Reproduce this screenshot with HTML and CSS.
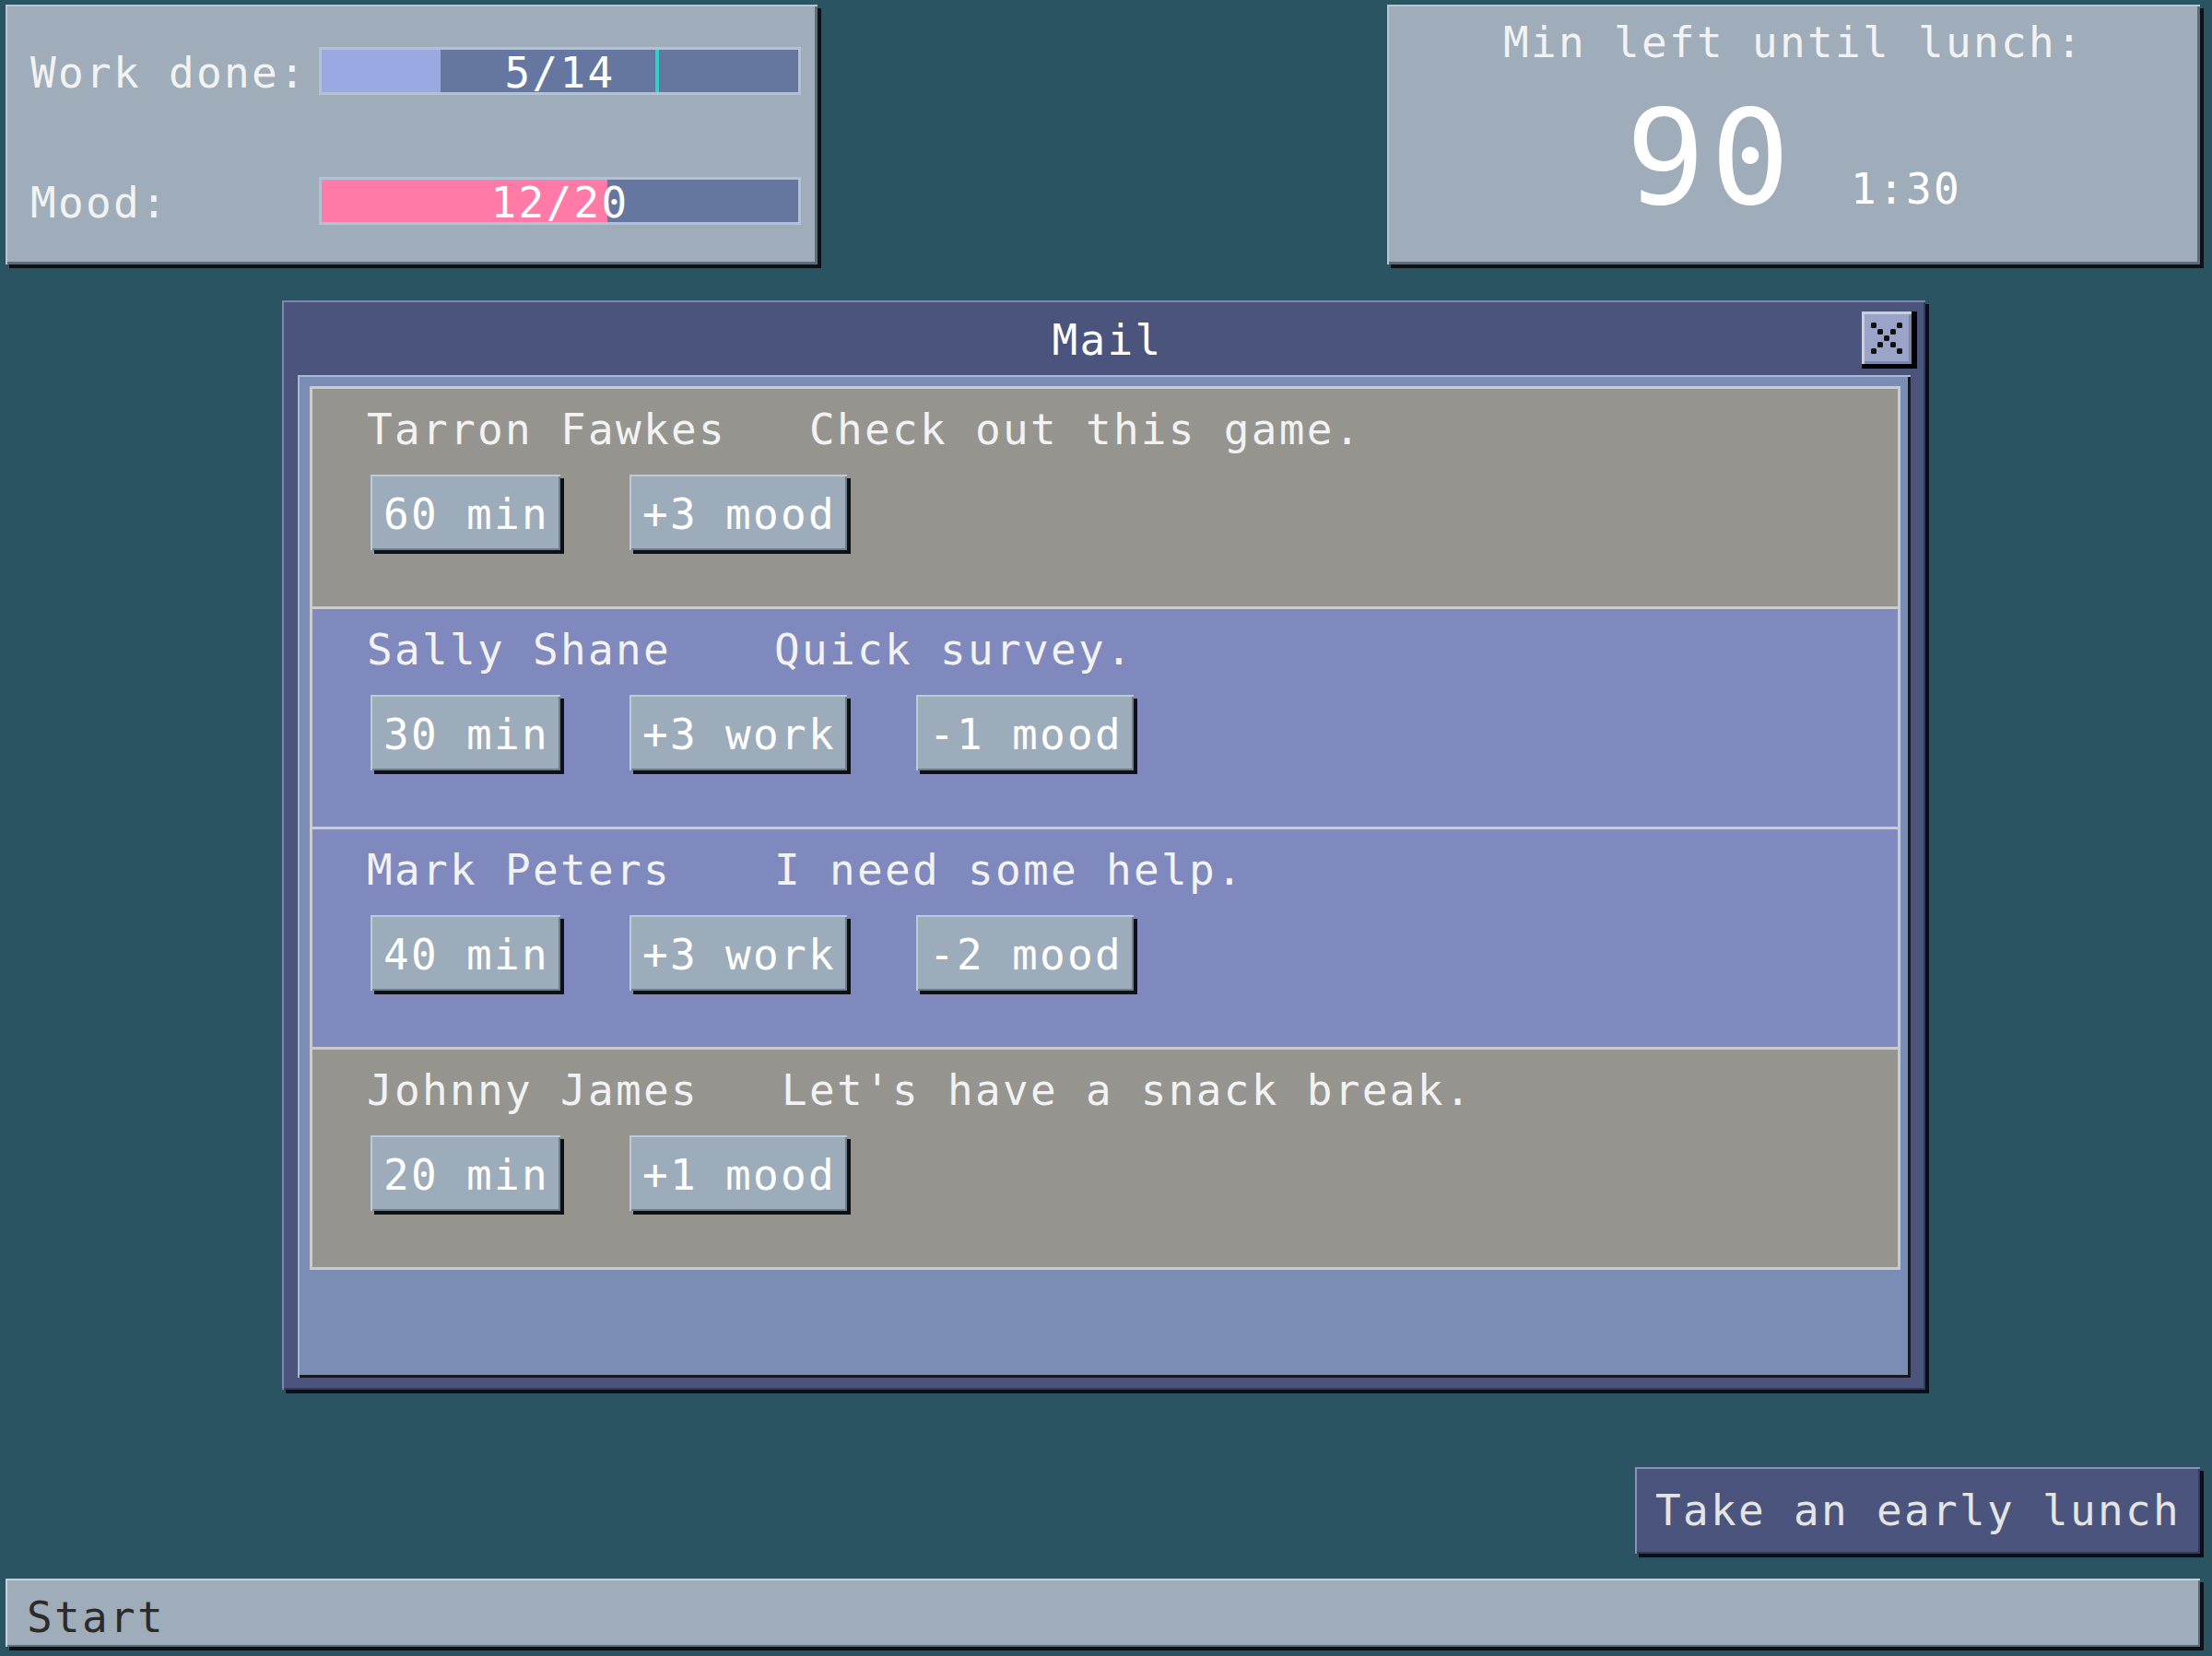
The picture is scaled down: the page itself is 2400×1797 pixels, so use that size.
FILE: index.html
```html
<!DOCTYPE html>
<html lang="en">
<head>
    <meta charset="UTF-8">
    <meta name="viewport" content="width=device-width, initial-scale=1.0">
    <title>Lunch Break</title>
    <link rel="stylesheet" href="styles.css">
</head>
<body>

<div class="top-row">
    <div class="panel stats">
        <div class="stat-label">Work done:</div>
        <div class="bar">
            <div class="bar-fill work" style="width: 25%"></div>
            <div class="bar-goal" style="left: 70%"></div>
            <div class="bar-text">5/14</div>
        </div>
        <div class="stat-label">Mood:</div>
        <div class="bar">
            <div class="bar-fill mood" style="width: 60%"></div>
            <div class="bar-text">12/20</div>
        </div>
    </div>

    <div class="panel timer">
        <div class="timer-title">Min left until lunch:</div>
        <div class="clock">
            <span class="clock-min">90</span>
            <span class="clock-time">1:30</span>
        </div>
    </div>
</div>

<!-- Mail window -->
<div class="window">
    <div class="window-title">
        <span></span>
        <span class="title">Mail</span>
        <button class="close-btn">
            <svg width="34" height="34" viewBox="0 0 34 34">
                <g fill="#111">
                    <rect x="0" y="0" width="6" height="6" rx="1.5"/>
                    <rect x="28" y="0" width="6" height="6" rx="1.5"/>
                    <rect x="7" y="7" width="6" height="6" rx="1.5"/>
                    <rect x="21" y="7" width="6" height="6" rx="1.5"/>
                    <rect x="14" y="14" width="6" height="6" rx="1.5"/>
                    <rect x="7" y="21" width="6" height="6" rx="1.5"/>
                    <rect x="21" y="21" width="6" height="6" rx="1.5"/>
                    <rect x="0" y="28" width="6" height="6" rx="1.5"/>
                    <rect x="28" y="28" width="6" height="6" rx="1.5"/>
                </g>
            </svg>
        </button>
    </div>
    <div class="window-body">
        <div class="mail-list">
            <div class="mail grey">
                <div class="mail-head"><span class="sender">Tarron Fawkes</span><span>Check out this game.</span></div>
                <div class="mail-actions">
                    <button class="act">60 min</button>
                    <button class="act">+3 mood</button>
                </div>
            </div>
            <div class="mail blue">
                <div class="mail-head"><span class="sender">Sally Shane</span><span>Quick survey.</span></div>
                <div class="mail-actions">
                    <button class="act">30 min</button>
                    <button class="act">+3 work</button>
                    <button class="act">-1 mood</button>
                </div>
            </div>
            <div class="mail blue">
                <div class="mail-head"><span class="sender">Mark Peters</span><span>I need some help.</span></div>
                <div class="mail-actions">
                    <button class="act">40 min</button>
                    <button class="act">+3 work</button>
                    <button class="act">-2 mood</button>
                </div>
            </div>
            <div class="mail grey">
                <div class="mail-head"><span class="sender">Johnny James</span><span>Let's have a snack break.</span></div>
                <div class="mail-actions">
                    <button class="act">20 min</button>
                    <button class="act">+1 mood</button>
                </div>
            </div>
        </div>
    </div>
</div>

<button class="lunch-btn">Take an early lunch</button>

<div class="taskbar">Start</div>

</body>
</html>
```

FILE: styles.css
```css
body {
    margin: 0;
    padding-top: 5px;
    height: 1792px;
    overflow: hidden;
    background-color: #2a5461;
    font-family: "DejaVu Sans Mono", "Liberation Mono", monospace;
    font-size: 46px;
    line-height: 1;
    letter-spacing: 2.3px;
    color: #f2f2f2;
}

button {
    font: inherit;
    letter-spacing: inherit;
    color: inherit;
    border: none;
    cursor: pointer;
}

/* raised grey panels */
.panel {
    box-sizing: border-box;
    background-color: #9eadb9;
    box-shadow: inset 2px 2px 0 #b9c6d1, inset -3px -3px 0 #5f6b77, 4px 4px 0 #0c1216;
}

.top-row {
    display: flex;
    justify-content: space-between;
    align-items: flex-start;
    padding: 0 13px 0 6px;
}

.stats {
    width: 881px;
    height: 282px;
    padding: 46px 0 0 27px;
    display: grid;
    grid-template-columns: 313px 523px;
    align-content: start;
    row-gap: 89px;
    align-items: center;
}
.stat-label {
    padding-top: 4px;
}

.bar {
    position: relative;
    box-sizing: border-box;
    height: 52px;
    border: 3px solid #b2c1d4;
    background-color: #6577a0;
}
.bar-fill {
    height: 100%;
}
.bar-fill.work {
    background-color: #9aa9e1;
}
.bar-fill.mood {
    background-color: #ff7aa6;
}
.bar-goal {
    position: absolute;
    top: 0;
    bottom: 0;
    width: 4px;
    background-color: #2bd4c4;
}
.bar-text {
    position: absolute;
    top: 0;
    left: 0;
    right: 0;
    bottom: 0;
    padding-top: 3px;
    display: flex;
    justify-content: center;
    align-items: center;
    color: #fff;
}

.timer {
    width: 882px;
    height: 282px;
    padding-top: 18px;
}
.timer-title {
    text-align: center;
}
.clock {
    display: flex;
    justify-content: center;
    align-items: baseline;
    margin-top: 31px;
    color: #fff;
}
.clock-min {
    font-size: 143px;
    letter-spacing: 6px;
}
.clock-time {
    margin-left: 60px;
}

/* window */
.window {
    box-sizing: border-box;
    width: 1783px;
    height: 1182px;
    margin: 39px 0 0 306px;
    padding-bottom: 13px;
    background-color: #4a547d;
    box-shadow: inset 2px 2px 0 #7b87ae, inset -2px -2px 0 #333b5c, 4px 4px 0 #0b0e18;
}
.window-title {
    height: 81px;
    display: grid;
    grid-template-columns: 1fr auto 1fr;
    align-items: start;
    padding: 0 9px 0 17px;
    box-sizing: border-box;
}
.window-title .title {
    padding-top: 20px;
    color: #fff;
}
.close-btn {
    justify-self: end;
    margin-top: 12px;
    width: 60px;
    height: 62px;
    padding: 0;
    display: flex;
    justify-content: center;
    align-items: center;
    background-color: #9aa4c9;
    border-right: 6px solid #000;
    border-bottom: 5px solid #000;
    box-shadow: inset 3px 3px 0 #c9cde2, inset -3px -3px 0 #7b85ab;
}

.window-body {
    box-sizing: border-box;
    height: 1088px;
    margin: 0 16px 0 17px;
    padding: 12px 11px 0 13px;
    background-color: #7a8db5;
    box-shadow: inset 2px 2px 0 #a8b9d3, inset -3px -3px 0 #151820;
}

.mail-list {
    display: flex;
    flex-direction: column;
    gap: 3px;
    padding: 3px;
    background-color: #cbcbcb;
}
.mail {
    box-sizing: border-box;
    height: 236px;
    padding: 21px 0 0 59px;
}
.mail.grey {
    background-color: #95948f;
}
.mail.blue {
    background-color: #7f89bd;
}
.mail-head {
    display: flex;
}
.sender {
    flex: none;
    min-width: 352px;
    margin-right: 90px;
}
.mail-actions {
    display: flex;
    gap: 75px;
    margin: 26px 0 0 4px;
}
.act {
    padding: 20px 12px 16px 14px;
    background-color: #9dacba;
    color: #fff;
    box-shadow: inset 2px 2px 0 #bccbd9, inset -2px -2px 0 #6f7d8a, 4px 4px 0 #0d1115;
}

.lunch-btn {
    display: block;
    margin: 84px 13px 0 auto;
    padding: 24px 21px 24px 22px;
    background-color: #4a547d;
    color: #e4e4e4;
    box-shadow: inset 2px 2px 0 #8790b5, inset -2px -2px 0 #333b5c, 4px 4px 0 #0b0e18;
}

.taskbar {
    box-sizing: border-box;
    height: 74px;
    margin: 27px 13px 0 6px;
    padding: 19px 23px;
    background-color: #9eadb9;
    color: #2b2b2b;
    box-shadow: inset 2px 2px 0 #c4d0da, inset -2px -2px 0 #5f6b77, 4px 4px 0 #0c1216;
}
```
